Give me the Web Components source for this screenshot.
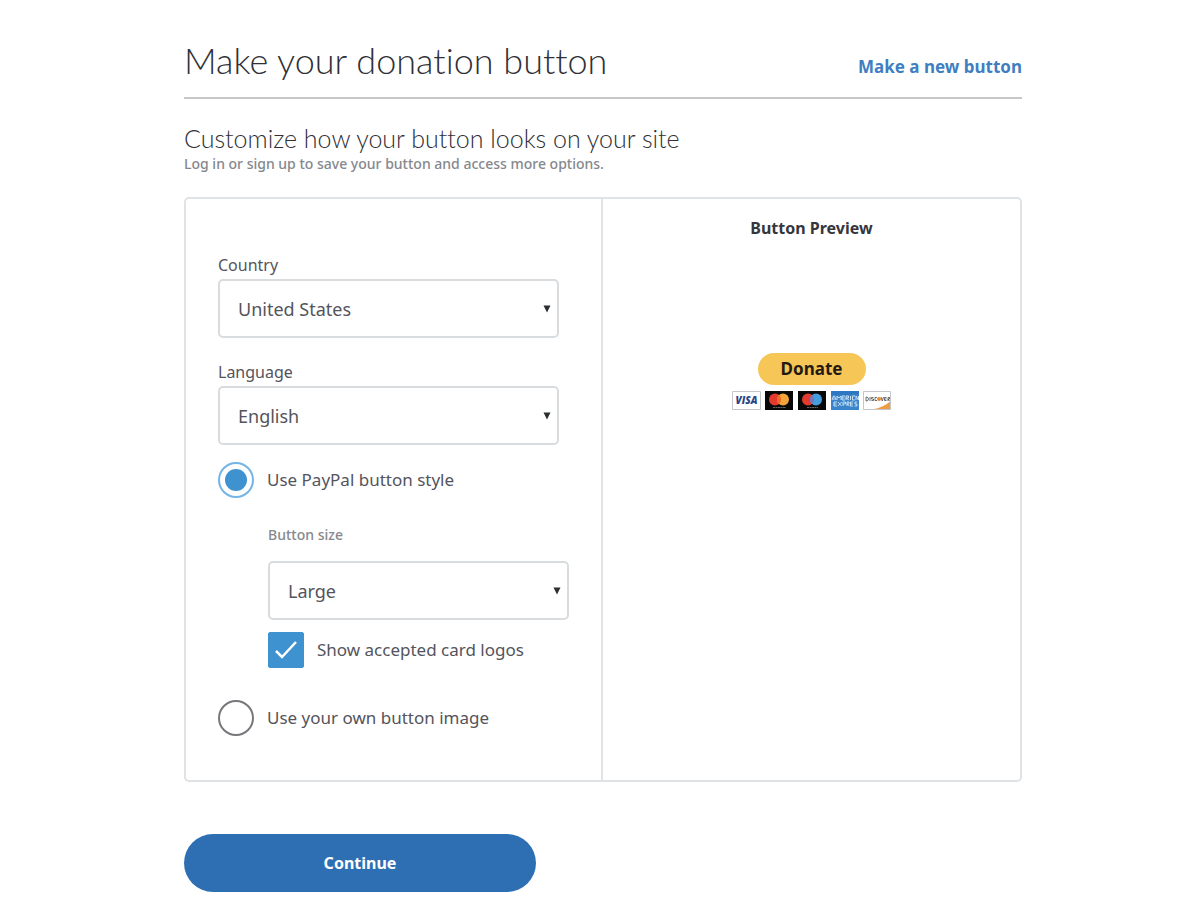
<!DOCTYPE html>
<html lang="en">
<head>
<meta charset="utf-8">
<meta name="viewport" content="width=device-width, initial-scale=1">
<title>Make your donation button</title>
<style>
  body { margin: 0; padding: 0 12px 0 18px; background: #fff; color: #54545c; font: 17px/24px "Noto Sans", "Open Sans", sans-serif; }
</style>
</head>
<body>
<donation-page></donation-page>

<script>
const define = (name, html, setup) => {
  const template = document.createElement('template');
  template.innerHTML = html;
  customElements.define(name, class extends HTMLElement {
    constructor() {
      super();
      this.attachShadow({ mode: 'open' }).append(template.content.cloneNode(true));
    }
    connectedCallback() { if (setup) setup(this, this.shadowRoot); }
  });
};

define('page-header', `
<style>
  :host { display: flex; justify-content: space-between; align-items: center; flex-wrap: wrap; padding: 36px 0 13px; border-bottom: 2px solid #c6c7c8; }
  h1 { margin: 0; font: 300 36px/48px Lato, sans-serif; font-variant-ligatures: none; color: #303036; }
  a { padding-top: 14px; font-weight: 700; color: #3f7fc1; text-decoration: none; }
  a:hover { text-decoration: underline; }
</style>
<h1><slot></slot></h1>
<a href="#new"><slot name="action"></slot></a>`);

define('section-intro', `
<style>
  :host { display: block; padding: 23px 0 23px; }
  h2 { margin: 0; font: 300 25px/32px Lato, sans-serif; font-variant-ligatures: none; color: #303036; }
  p { margin: 0; font-size: 14px; font-weight: 500; line-height: 20px; color: #85888d; }
</style>
<h2><slot></slot></h2>
<p><slot name="note"></slot></p>`);

define('select-field', `
<style>
  :host { display: block; }
  label { display: block; font-size: 16px; line-height: 24px; padding-bottom: 2px; }
  :host([muted]) label { font-size: 14px; font-weight: 500; padding-bottom: 14px; color: #85888d; }
  .box { display: grid; align-items: center; }
  select, svg { grid-area: 1 / 1; }
  select { appearance: none; width: 100%; height: 59px; margin: 0; padding: 0 36px 0 18px; border: 2px solid #d9dcde; border-radius: 5px; background: #fff; color: inherit; font: inherit; font-size: 18px; }
  svg { justify-self: end; width: 8px; height: 8px; margin-right: 8px; pointer-events: none; }
</style>
<label for="field"></label>
<div class="box">
  <select id="field"></select>
  <svg viewBox="0 0 8 8" aria-hidden="true"><path d="M0.5 0.5h7L4 7.5z" fill="#2c2e2f"/></svg>
</div>`, (host, root) => {
  root.querySelector('label').textContent = host.getAttribute('label');
  const select = root.querySelector('select');
  select.replaceChildren(...host.getAttribute('options').split('|').map(text => new Option(text)));
});

define('card-logos', `
<style>
  :host { display: flex; gap: 4px; }
  svg { display: block; width: 29px; height: 19px; }
  svg + svg { width: 29px; }
  svg:nth-of-type(n + 4) { width: 28px; }
  text { font-family: "Open Sans", sans-serif; font-weight: 800; }
</style>
<svg viewBox="0 0 29 19" role="img" aria-label="Visa"><path d="M.5 .5h28v18H.5z" fill="#fff" stroke="#c3c6cb"/><text x="14.5" y="13" text-anchor="middle" font-size="10" font-style="italic" fill="#2b4486">VISA</text></svg>
<svg viewBox="0 0 29 19" role="img" aria-label="Mastercard"><path d="M0 0h28v19H0z" fill="#080808"/><circle cx="10" cy="8.5" r="6" fill="#e23b2e"/><circle cx="18" cy="8.5" r="6" fill="#f2a33a"/><path d="M14 4a6 6 0 0 1 0 9 6 6 0 0 1 0-9z" fill="#f0672b"/><path d="M8 16.5h13" stroke="#666" stroke-dasharray="2 .5"/></svg>
<svg viewBox="0 0 29 19" role="img" aria-label="Maestro"><path d="M0 0h28v19H0z" fill="#080808"/><circle cx="10" cy="8.5" r="6" fill="#e23b2e"/><circle cx="18" cy="8.5" r="6" fill="#459ddd"/><path d="M14 4a6 6 0 0 1 0 9 6 6 0 0 1 0-9z" fill="#7673c0"/><path d="M9 16.5h11" stroke="#666" stroke-dasharray="2 .5"/></svg>
<svg viewBox="0 0 28 19" role="img" aria-label="American Express"><path d="M0 0h28v19H0z" fill="#3a84cb"/><path d="M0 0h28v3L0 5z" fill="#2d76c2"/><path d="M1 9l1.500-4h1L5 9M2 8h2M6 9V5l2 2 2-2v4M14 5h-3v4h3M11 7h2.500M15 9V5h2.500v2H15l3 2M19.500 5v4M24 5h-2.500v4H24M25 9V5l2.500 4V5M6 11H3v4h3M3 13h2.500M7 11l3.500 4M10.500 11L7 15M12 15v-4h2.500v2H12M16 15v-4h2v2h-2l2.500 2M22 11h-2.500v4H22M19.500 13H22M26 11h-2v2h2v2h-2.500" fill="none" stroke="#d2e8f7" stroke-width=".9"/></svg>
<svg viewBox="0 0 28 19" role="img" aria-label="Discover"><path d="M27.500 10v8.500H9q12-2 18.500-8.500z" fill="#f09b3e"/><path d="M.5 .5h27v18H.5z" fill="none" stroke="#c3c6cb"/><path d="M3 6v4q2.500 0 2.500-2T3 6M7 6v4M10.500 6.500H8.500V8h2v1.500h-2M14 6.500h-2v3h2M18 6l1.300 4L20.500 6M23.500 6.500h-2v3h2M21.500 8h2M25 10V6.500h1.500V8H25l1.500 2" fill="none" stroke="#4b4b4b" stroke-width=".8"/><circle cx="16" cy="8" r="2" fill="#ef8a2c"/></svg>`);

define('button-preview', `
<style>
  :host { display: flex; flex-direction: column; align-items: center; padding: 16px 0; }
  h3 { margin: 0 0 112px; font-size: 16px; line-height: 26px; font-weight: 700; color: #36363c; }
  button { width: 108px; height: 32px; margin: 0 0 6px; padding: 0; border: 0; border-radius: 16px; background: #f6c657; color: #251a12; font: inherit; font-weight: 700; line-height: 32px; }
</style>
<h3>Button Preview</h3>
<button type="button">Donate</button>
<card-logos></card-logos>`, (host, root) => {
  host.showLogos = show => { root.querySelector('card-logos').style.visibility = show ? 'visible' : 'hidden'; };
});

define('button-options', `
<style>
  :host { display: block; padding: 54px 32px 44px; }
  form { display: flex; flex-direction: column; }
  .main { width: 100%; max-width: 341px; padding-bottom: 22px; }
  .choice { display: flex; align-items: center; gap: 13px; min-height: 36px; font-size: 17px; }
  .choice.first { margin-top: -5px; }
  .nested { width: 301px; max-width: 100%; margin: 25px 0 32px; padding-left: 50px; }
  .nested .choice { margin-top: 12px; }
  input { appearance: none; flex: none; display: grid; place-items: center; width: 36px; height: 36px; margin: 0; background: #fff; }
  input[type=radio] { border: 2px solid #77777c; border-radius: 50%; }
  input[type=radio]:checked { border-color: #73b5e6; }
  input[type=radio]:checked::before { content: ""; width: 22px; height: 22px; border-radius: 50%; background: #3e92cf; }
  .tick { display: grid; place-items: center; }
  .tick > * { grid-area: 1 / 1; }
  input[type=checkbox] { border: 1px solid #77777c; border-radius: 2px; }
  input[type=checkbox]:checked { border-color: #3e92cf; background: #3e92cf; }
  svg { width: 24px; height: 20px; pointer-events: none; }
</style>
<form>
  <select-field class="main" label="Country" options="United States|Canada|United Kingdom"></select-field>
  <select-field class="main" label="Language" options="English|French|Spanish"></select-field>
  <div class="choice first"><input type="radio" name="style" id="paypal" checked><label for="paypal">Use PayPal button style</label></div>
  <div class="nested">
    <select-field muted label="Button size" options="Large|Small"></select-field>
    <div class="choice">
      <span class="tick"><input type="checkbox" id="logos" checked><svg viewBox="0 0 24 20" aria-hidden="true"><path d="M2 11l6 6L22 2" fill="none" stroke="#fff" stroke-width="2.500"/></svg></span>
      <label for="logos">Show accepted card logos</label>
    </div>
  </div>
  <div class="choice"><input type="radio" name="style" id="own"><label for="own">Use your own button image</label></div>
</form>`, (host, root) => {
  root.querySelector('#logos').addEventListener('change', event =>
    host.dispatchEvent(new CustomEvent('logos-change', { detail: event.target.checked })));
});

define('donation-page', `
<style>
  :host { display: block; max-width: 838px; margin: 0 auto; }
  .panel { display: grid; grid-template-columns: 1fr 1fr; border: 2px solid #dfe3e6; border-radius: 5px; }
  button-options { border-right: 2px solid #dfe3e6; }
  .continue { display: block; width: 100%; max-width: 352px; height: 58px; margin: 52px 0 20px; border: 0; border-radius: 29px; background: #2e6fb4; color: #fff; font: inherit; font-size: 16px; font-weight: 700; }
  @media (max-width: 700px) { .panel { grid-template-columns: 1fr; } }
</style>
<page-header>Make your donation button<span slot="action">Make a new button</span></page-header>
<main>
  <section-intro>Customize how your button looks on your site<span slot="note">Log in or sign up to save your button and access more options.</span></section-intro>
  <div class="panel">
    <button-options></button-options>
    <button-preview></button-preview>
  </div>
  <button class="continue" type="button">Continue</button>
</main>`, (host, root) => {
  root.querySelector('button-options').addEventListener('logos-change', event =>
    root.querySelector('button-preview').showLogos(event.detail));
});
</script>
</body>
</html>
